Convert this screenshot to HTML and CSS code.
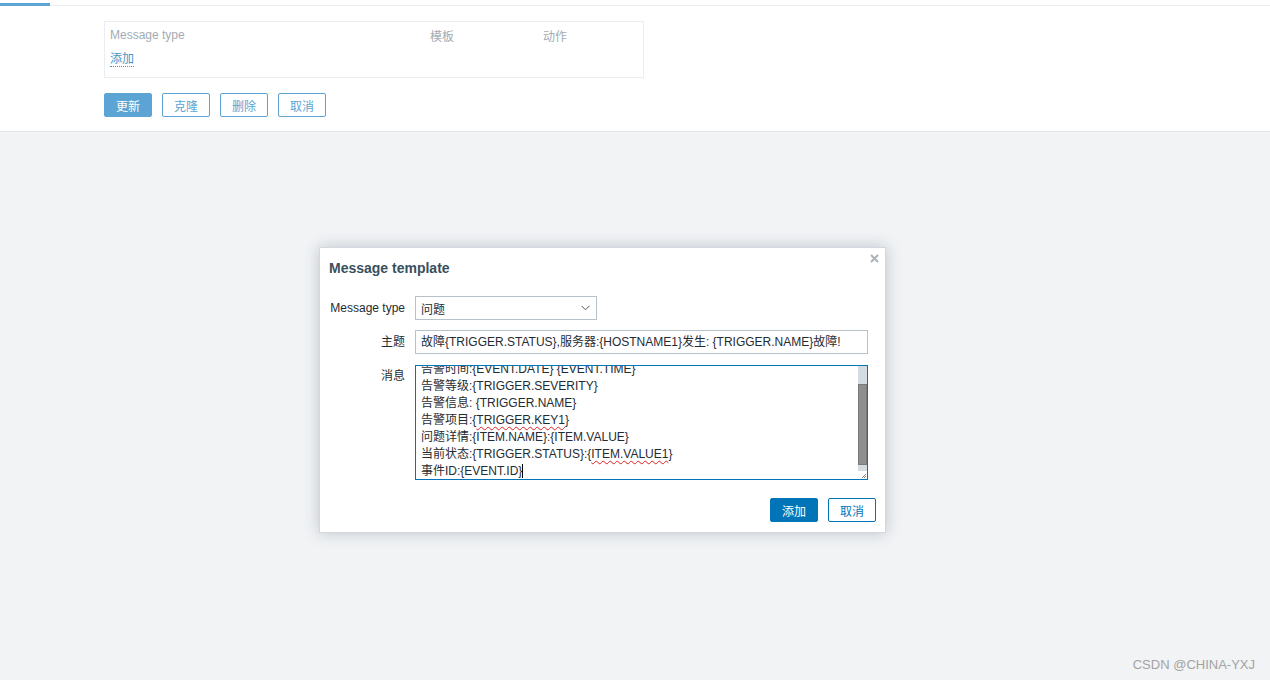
FILE: index.html
```html
<!DOCTYPE html>
<html lang="zh">
<head>
<meta charset="utf-8">
<title>Message template</title>
<link rel="stylesheet" href="styles.css">
</head>
<body>
<div class="top">
  <div class="tab-strip">
    <div class="tab-active"></div>
    <div class="tab-line"></div>
  </div>
  <div class="form-area">
    <div class="msg-box">
      <table class="msg-table">
        <thead>
          <tr><th class="c1">Message type</th><th class="c2">模板</th><th class="c3">动作</th></tr>
        </thead>
        <tbody>
          <tr><td colspan="3"><a class="link">添加</a></td></tr>
        </tbody>
      </table>
    </div>
    <div class="btn-row">
      <button class="btn btn-primary-light">更新</button>
      <button class="btn btn-outline">克隆</button>
      <button class="btn btn-outline">删除</button>
      <button class="btn btn-outline">取消</button>
    </div>
  </div>
</div>

<div class="modal">
  <span class="close">
    <svg width="9" height="9" viewBox="0 0 9 9"><path d="M1 1L8 8M8 1L1 8" stroke="#a9b3ba" stroke-width="2"/></svg>
  </span>
  <div class="modal-title">Message template</div>
  <div class="modal-form">
    <div class="row">
      <label class="lbl">Message type</label>
      <div class="select">
        <span>问题</span>
        <svg class="chev" width="9" height="6" viewBox="0 0 9 6"><path d="M0.5 0.8L4.5 4.8L8.5 0.8" fill="none" stroke="#555" stroke-width="1"/></svg>
      </div>
    </div>
    <div class="row">
      <label class="lbl">主题</label>
      <div class="input">故障{TRIGGER.STATUS},服务器:{HOSTNAME1}发生: {TRIGGER.NAME}故障!</div>
    </div>
    <div class="row">
      <label class="lbl">消息</label>
      <div class="textarea">
        <div class="ta-text">
          <div class="ta-lines">
            <div>告警时间:{EVENT.DATE} {EVENT.TIME}</div>
            <div>告警等级:{TRIGGER.SEVERITY}</div>
            <div>告警信息: {TRIGGER.NAME}</div>
            <div>告警项目:{<span class="spell">TRIGGER.KEY1</span>}</div>
            <div>问题详情:{ITEM.NAME}:{ITEM.VALUE}</div>
            <div>当前状态:{TRIGGER.STATUS}:{<span class="spell">ITEM.VALUE1</span>}</div>
            <div>事件ID:{EVENT.ID}<span class="caret"></span></div>
          </div>
        </div>
        <div class="ta-scroll">
          <div class="sc-track-top"></div>
          <div class="sc-thumb"></div>
          <div class="sc-track-bottom"></div>
          <div class="sc-corner">
            <svg width="8" height="8" viewBox="0 0 8 8"><path d="M7 3L3 7M7 5L5 7" stroke="#888" stroke-width="1"/></svg>
          </div>
        </div>
      </div>
    </div>
  </div>
  <div class="modal-footer">
    <button class="btn btn-primary">添加</button>
    <button class="btn btn-outline-dark">取消</button>
  </div>
</div>

<div class="watermark">CSDN @CHINA-YXJ</div>
</body>
</html>
```

FILE: styles.css
```css
html, body {
  margin: 0;
  padding: 0;
  height: 100%;
}
body {
  background: #f1f3f5;
  font-family: "Liberation Sans", Arial, "Noto Sans CJK SC", sans-serif;
  font-size: 12px;
  color: #1f2c33;
  position: relative;
  overflow: hidden;
}
.top {
  background: #ffffff;
  border-bottom: 1px solid #e4e8eb;
  height: 131px;
}
.tab-strip {
  display: flex;
  align-items: flex-end;
  height: 6px;
}
.tab-active {
  width: 50px;
  height: 3px;
  background: #5ba4d3;
}
.tab-line {
  flex: 1;
  height: 1px;
  background: #ebeef0;
}
.form-area {
  padding-left: 104px;
  padding-top: 15px;
}
.msg-box {
  width: 538px;
  border: 1px solid #ebeef0;
  padding: 0 0 7px 0;
}
.msg-table {
  border-collapse: collapse;
  width: 100%;
  table-layout: fixed;
}
.msg-table th {
  font-weight: normal;
  color: #a2acb4;
  text-align: left;
  height: 24px;
  padding: 2px 0 0 5px;
  box-sizing: border-box;
}
.msg-table th.c1 { width: 320px; }
.msg-table th.c2 { width: 113px; }
.msg-table td {
  height: 24px;
  padding: 0 0 2px 5px;
  box-sizing: border-box;
}
.link {
  color: #4796c4;
  border-bottom: 1px dotted #4796c4;
  cursor: pointer;
}
.btn-row {
  display: flex;
  gap: 10px;
  margin-top: 15px;
}
.btn {
  font-family: "Liberation Sans", Arial, "Noto Sans CJK SC", sans-serif;
  font-size: 12px;
  width: 48px;
  height: 24px;
  padding: 0;
  border-radius: 2px;
  box-sizing: border-box;
  cursor: pointer;
}
.btn-primary-light {
  background: #5ba4d3;
  border: 1px solid #5ba4d3;
  color: #ffffff;
}
.btn-outline {
  background: #ffffff;
  border: 1px solid #5ba4d3;
  color: #5ba4d3;
}
.btn-primary {
  background: #0275b8;
  border: 1px solid #0275b8;
  color: #ffffff;
}
.btn-outline-dark {
  background: #ffffff;
  border: 1px solid #0275b8;
  color: #0275b8;
}

.modal {
  position: absolute;
  left: 319px;
  top: 247px;
  width: 567px;
  height: 286px;
  box-sizing: border-box;
  background: #ffffff;
  border: 1px solid #d2d9de;
  box-shadow: 0 0 14px rgba(60, 80, 95, 0.28);
}
.close {
  position: absolute;
  top: 6px;
  right: 6px;
  line-height: 0;
}
.modal-title {
  padding: 12px 9px 0;
  font-size: 14px;
  font-weight: bold;
  line-height: 16px;
  color: #384f5e;
}
.modal-form {
  margin-top: 20px;
  display: flex;
  flex-direction: column;
  gap: 10px;
  padding: 0 17px 0 9px;
}
.row {
  display: flex;
  align-items: flex-start;
  gap: 10px;
}
.lbl {
  width: 76px;
  text-align: right;
  line-height: 24px;
  flex-shrink: 0;
}
.select {
  width: 182px;
  height: 24px;
  box-sizing: border-box;
  border: 1px solid #b6c1c8;
  display: flex;
  align-items: center;
  justify-content: space-between;
  padding: 0 6px 0 5px;
}
.chev {
  display: block;
}
.input {
  width: 453px;
  height: 24px;
  box-sizing: border-box;
  border: 1px solid #b6c1c8;
  line-height: 22px;
  padding: 0 5px;
  white-space: nowrap;
  overflow: hidden;
}
.textarea {
  width: 453px;
  height: 115px;
  box-sizing: border-box;
  border: 1px solid #0275b8;
  display: flex;
  margin-top: 1px;
}
.ta-text {
  flex: 1;
  overflow: hidden;
  padding: 0 5px;
}
.ta-lines {
  margin-top: -5px;
  line-height: 17px;
  white-space: nowrap;
}
.spell {
  text-decoration: underline wavy #e02020;
  text-decoration-thickness: 1px;
  text-underline-offset: 2px;
}
.caret {
  display: inline-block;
  width: 1px;
  height: 14px;
  background: #000;
  vertical-align: -3px;
}
.ta-scroll {
  width: 9px;
  display: flex;
  flex-direction: column;
}
.sc-track-top {
  height: 18px;
  background: #d3dce1;
}
.sc-thumb {
  height: 81px;
  box-sizing: border-box;
  background: #8f8f8f;
  border: 1px solid #7a7a7a;
}
.sc-track-bottom {
  height: 6px;
  background: #d3dce1;
}
.sc-corner {
  flex: 1;
  background: #ffffff;
  line-height: 0;
  display: flex;
  align-items: flex-end;
  justify-content: flex-end;
}
.modal-footer {
  position: absolute;
  right: 9px;
  bottom: 10px;
  display: flex;
  gap: 10px;
}
.watermark {
  position: absolute;
  right: 15px;
  bottom: 8px;
  font-size: 13px;
  color: #a3a3a3;
  font-family: "Liberation Sans", Arial, sans-serif;
}
```
